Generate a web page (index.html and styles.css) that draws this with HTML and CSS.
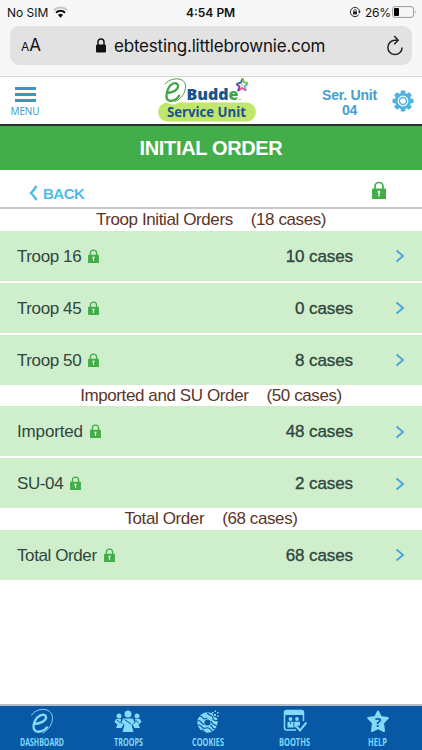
FILE: index.html
```
<!DOCTYPE html>
<html lang="en">
<head>
    <meta charset="UTF-8">
    <meta name="viewport" content="width=device-width, initial-scale=1.0">
    <title>eBudde Service Unit - Initial Order</title>
    <link rel="stylesheet" href="styles.css">
</head>
<body>

<svg class="defs" width="0" height="0">
    <symbol id="lock" viewBox="0 0 14 18">
        <path d="M3 9V5.500a4 4 0 0 1 8 0V9" fill="none" stroke="#43ad4a" stroke-width="1.700"/>
        <rect x="0" y="7.500" width="14" height="10.500" rx=".8" fill="#43ad4a"/>
        <circle cx="7" cy="11" r="1.500" fill="#e4f5e0"/>
        <path d="M7 11v4.500" stroke="#e4f5e0" stroke-width="1.400"/>
    </symbol>
    <symbol id="next" viewBox="0 0 10 14">
        <path d="M1.500 1.500L8 7l-6.500 5.500" fill="none" stroke="#4aa3df" stroke-width="1.900"/>
    </symbol>
</svg>

<div class="status">
    <span class="carrier">No SIM</span>
    <svg class="wifi" width="15" height="12" viewBox="0 0 15 12">
        <path d="M.8 4.200a9.600 9.600 0 0 1 13.400 0" fill="none" stroke="#c4c4c4" stroke-width="1.900"/>
        <path d="M3 6.700a6.400 6.400 0 0 1 9 0" fill="none" stroke="#111" stroke-width="2"/>
        <path d="M5 9a3.700 3.700 0 0 1 5 0L7.500 11.700z" fill="#111"/>
    </svg>
    <span class="clock">4:54 PM</span>
    <svg class="rotation" width="12" height="12" viewBox="0 0 12 12">
        <path d="M9.800 8.600A4.600 4.600 0 1 1 10.600 6" fill="none" stroke="#222" stroke-width="1"/>
        <path d="M8.900 5.600h3l-1.500 2z" fill="#222"/>
        <rect x="4" y="5.400" width="4" height="3" fill="#222"/>
        <path d="M4.800 5.500v-.7a1.200 1.200 0 0 1 2.400 0v.7" fill="none" stroke="#222" stroke-width=".8"/>
    </svg>
    <span class="percent">26%</span>
    <svg class="battery" width="25" height="12" viewBox="0 0 25 12">
        <rect x=".6" y=".6" width="21" height="10.800" rx="2.600" fill="none" stroke="#999" stroke-width="1"/>
        <rect x="2" y="2" width="5" height="8" rx="1" fill="#000"/>
        <path d="M23 4.300q1.500 1.700 0 3.400z" fill="#999"/>
    </svg>
</div>

<div class="browser">
    <div class="address">
        <span class="reader"><small>A</small>A</span>
        <svg class="secure" width="10" height="15" viewBox="0 0 10 15">
            <path d="M2 7V4a3 3 0 0 1 6 0v3" fill="none" stroke="#111" stroke-width="1.400"/>
            <rect y="6.500" width="10" height="8" rx="1.200" fill="#111"/>
        </svg>
        <span class="url">ebtesting.littlebrownie.com</span>
        <svg class="reload" width="18" height="21" viewBox="0 0 18 21">
            <path d="M11.200 5.300H9a7.100 7.100 0 1 0 7.100 7.100" fill="none" stroke="#222" stroke-width="1.500"/>
            <path d="M8.200 1l4 4.300-4 4" fill="none" stroke="#222" stroke-width="1.500"/>
        </svg>
    </div>
</div>

<header class="header">
    <div class="menu">
        <span class="bars"></span>
        <span>MENU</span>
    </div>
    <svg class="logo" width="100" height="46" viewBox="0 0 100 46">
        <rect x="1" y="24.500" width="98" height="19" rx="9.500" fill="#c0e66b"/>
        <ellipse cx="16" cy="15.500" rx="9.500" ry="11" fill="#fff"/>
        <path d="M10.500 15C17 14.500 21.500 11.500 21 7.500 20 3 13 5 10.500 12.500 8 20.500 10.500 23 14 22.800 18 22.500 21 20 22.500 17" fill="none" stroke="#43a548" stroke-width="2.300"/>
        <path d="M8 6.500C12-.5 28-2 28.500 8 28.700 15 24 21.500 17.500 23.500" fill="none" stroke="#43a548" stroke-width="1"/>
        <text class="logo-text" x="29.500" y="22" textLength="52" lengthAdjust="spacingAndGlyphs">Budd<tspan class="leaf">e</tspan></text>
        <g fill="none" stroke-width="1.900">
            <path d="M80 6l4-1.500 1.500-4" stroke="#2a69b0"/>
            <path d="M85.500 0l1.500 4.500 4 .5" stroke="#7cc143"/>
            <path d="M91 5.500l-3.500 3 1.500 4" stroke="#50b8e6"/>
            <path d="M89 12.500L85 10l-4 3" stroke="#e65a94"/>
            <path d="M81 13l1.500-4.500L79 6" stroke="#77459a"/>
        </g>
        <circle cx="85" cy="7" r="1" fill="#f4b33d"/>
        <circle cx="83" cy="21.500" r=".6" fill="#18528f"/>
        <text class="logo-service" x="10" y="38.500" textLength="79" lengthAdjust="spacingAndGlyphs">Service Unit</text>
    </svg>
    <div class="unit">Ser. Unit<br>04</div>
    <svg class="gear" width="22" height="22" viewBox="-11 -11 22 22">
        <g fill="#4db2e2">
            <rect x="-2.300" y="-10.500" width="4.600" height="21" rx="1"/>
            <rect x="-2.300" y="-10.500" width="4.600" height="21" rx="1" transform="rotate(45)"/>
            <rect x="-2.300" y="-10.500" width="4.600" height="21" rx="1" transform="rotate(90)"/>
            <rect x="-2.300" y="-10.500" width="4.600" height="21" rx="1" transform="rotate(135)"/>
            <circle r="8"/>
        </g>
        <circle r="4.800" fill="#4db2e2" stroke="#fff" stroke-width="1.200"/>
        <circle r="2.800" fill="#fff"/>
    </svg>
</header>

<h1 class="title">INITIAL ORDER</h1>

<div class="toolbar">
    <a class="back">
        <svg width="9" height="16" viewBox="0 0 9 16">
            <path d="M7.500 1Q5 5 2 8q3 3 5.500 7" fill="none" stroke="#4dbbec" stroke-width="2.400"/>
        </svg>
        <span>BACK</span>
    </a>
    <svg class="lock-all" width="14" height="18"><use href="#lock"/></svg>
</div>

<main>
    <h2 class="group"><span>Troop Initial Orders</span><span>(18 cases)</span></h2>
    <div class="rows">
        <div class="row">
            <span class="name">Troop 16</span><svg class="lock" width="11" height="14"><use href="#lock"/></svg>
            <span class="cases">10 cases</span><svg class="next" width="10" height="14"><use href="#next"/></svg>
        </div>
        <div class="row">
            <span class="name">Troop 45</span><svg class="lock" width="11" height="14"><use href="#lock"/></svg>
            <span class="cases">0 cases</span><svg class="next" width="10" height="14"><use href="#next"/></svg>
        </div>
        <div class="row">
            <span class="name">Troop 50</span><svg class="lock" width="11" height="14"><use href="#lock"/></svg>
            <span class="cases">8 cases</span><svg class="next" width="10" height="14"><use href="#next"/></svg>
        </div>
    </div>

    <h2 class="group"><span>Imported and SU Order</span><span>(50 cases)</span></h2>
    <div class="rows">
        <div class="row">
            <span class="name wide">Imported</span><svg class="lock" width="11" height="14"><use href="#lock"/></svg>
            <span class="cases">48 cases</span><svg class="next" width="10" height="14"><use href="#next"/></svg>
        </div>
        <div class="row">
            <span class="name">SU-04</span><svg class="lock" width="11" height="14"><use href="#lock"/></svg>
            <span class="cases">2 cases</span><svg class="next" width="10" height="14"><use href="#next"/></svg>
        </div>
    </div>

    <h2 class="group"><span>Total Order</span><span>(68 cases)</span></h2>
    <div class="rows">
        <div class="row">
            <span class="name">Total Order</span><svg class="lock" width="11" height="14"><use href="#lock"/></svg>
            <span class="cases">68 cases</span><svg class="next" width="10" height="14"><use href="#next"/></svg>
        </div>
    </div>
</main>

<nav class="tabs">
    <a class="tab">
        <svg width="24" height="26" viewBox="0 0 24 26">
            <path d="M4 16C11 15.500 16.500 12.500 16 9 15 4.500 7.500 7 4.500 14 2 21 5 24 8.500 23.700 13 23.200 16 21 17.500 18.500" fill="none" stroke="#82d9fa" stroke-width="2.400"/>
            <path d="M1.500 7.500C6-.5 21.500-1.500 22.500 9.500 22.700 16 18.500 22 12.500 25" fill="none" stroke="#82d9fa" stroke-width="1"/>
        </svg>
        <svg width="44" height="14"><text x="0" y="10" textLength="44" lengthAdjust="spacingAndGlyphs">DASHBOARD</text></svg>
    </a>
    <a class="tab">
        <svg width="28" height="26" viewBox="0 0 28 26">
            <g fill="#82d9fa">
                <circle cx="14" cy="6" r="3.500"/>
                <circle cx="5" cy="8" r="2.500"/>
                <circle cx="23" cy="8" r="2.500"/>
                <path d="M9 10.500h10l1.500 4-3 2.500 2 7h-11l2-7-3-2.500z"/>
                <path d="M2 11h5l-.5 3.500 3 2L7.500 20H2l1.500-3.500L.5 14z"/>
                <path d="M26 11h-5l.5 3.500-3 2 2 3.500H26l-1.500-3.500 3-2.500z"/>
            </g>
            <path d="M10.500 11.500l6.500 4.500M3 12l3.500 3M21.500 12l3 3" stroke="#0758a5" stroke-width="1"/>
        </svg>
        <svg width="29" height="14"><text x="0" y="10" textLength="29" lengthAdjust="spacingAndGlyphs">TROOPS</text></svg>
    </a>
    <a class="tab">
        <svg width="24" height="26" viewBox="0 0 24 26">
            <circle cx="11.500" cy="14.500" r="6.600" fill="none" stroke="#82d9fa" stroke-width="7.200"/>
            <path d="M3 8q3 0 4 2t4 0M1.500 12.500q3 0 4 2t3 1.500M2 17q3 0 4 2t4 1 5 2 3 1M11 5q2 2 4 2.500t2 3 5 2M15 13q1 3 3 3.500t3 2M14 17.500q2 0 2.500 2t3 1M5 22q3 0 4 3" fill="none" stroke="#0758a5" stroke-width="1.200"/>
            <path d="M15 2h9v8l-6-1z" fill="#0758a5"/>
            <path d="M16 4h1.500v1.500H16zM18.500 2.500H20V4h-1.500zM21 4h1.500v1.500H21zM18 6h2v2h-2zM21 7.500h1.500V9H21z" fill="#82d9fa"/>
        </svg>
        <svg width="32" height="14"><text x="0" y="10" textLength="32" lengthAdjust="spacingAndGlyphs">COOKIES</text></svg>
    </a>
    <a class="tab">
        <svg width="24" height="26" viewBox="0 0 24 26">
            <path d="M20.500 13V4.500q0-2-2-2h-15q-2 0-2 2V20q0 2 2 2H13" fill="none" stroke="#82d9fa" stroke-width="1.500"/>
            <path d="M1.500 3h19v4h-19z" fill="#82d9fa"/>
            <g fill="#82d9fa">
                <circle cx="7.500" cy="11" r="1.900"/>
                <circle cx="14" cy="11" r="1.900"/>
                <path d="M4.500 13.800h6v5.700h-6zM11.300 13.800h5.700v3l-2 2.700h-3.700z"/>
            </g>
            <path d="M7.500 13.500v3" stroke="#0758a5" stroke-width=".8"/>
            <path d="M13.500 18.500l3.500 4 6.500-8" fill="none" stroke="#0758a5" stroke-width="4"/>
            <path d="M13.500 18.500l3.500 4 6.500-8" fill="none" stroke="#82d9fa" stroke-width="2"/>
        </svg>
        <svg width="31" height="14"><text x="0" y="10" textLength="31" lengthAdjust="spacingAndGlyphs">BOOTHS</text></svg>
    </a>
    <a class="tab">
        <svg width="24" height="26" viewBox="0 0 24 26">
            <path d="M12 3.500l2.800 5.500 7 1-4.800 5 1 8-6-3-6 3 1-8-4.800-5 7-1z" fill="#82d9fa" stroke="#82d9fa" stroke-width="2" stroke-linejoin="round"/>
            <text class="question" x="12" y="19" text-anchor="middle">?</text>
        </svg>
        <svg width="19" height="14"><text x="0" y="10" textLength="19" lengthAdjust="spacingAndGlyphs">HELP</text></svg>
    </a>
</nav>

</body>
</html>
```
FILE: styles.css
```
* {
    box-sizing: border-box;
}

body {
    margin: 0;
    height: 750px;
    display: flex;
    flex-direction: column;
    overflow: hidden;
    background-color: #fff;
    font-family: "Liberation Sans", Arial, sans-serif;
}

svg {
    display: block;
    flex: none;
}

.defs {
    position: absolute;
}

/* phone status bar */
.status {
    display: flex;
    align-items: center;
    height: 24px;
    padding: 0 5px 0 7px;
    background-color: #f7f7f7;
    color: #111;
    font-family: Inter, sans-serif;
    font-size: 12px;
    white-space: nowrap;
}

.carrier {
    width: 41px;
}

.wifi {
    margin-left: 5px;
}

.clock {
    margin-left: 118px;
    width: 50px;
    font-weight: 600;
}

.rotation {
    margin-left: auto;
}

.percent {
    margin-left: 4px;
    width: 27px;
    letter-spacing: -0.2px;
}

/* address bar */
.browser {
    height: 53px;
    padding: 2px 10px 0;
    background-color: #f7f7f7;
    border-bottom: 1px solid #d5d5d5;
}

.address {
    display: flex;
    align-items: center;
    height: 39px;
    padding: 0 8px 0 11px;
    border-radius: 9px;
    background-color: #e2e2e3;
    color: #111;
    font-family: Inter, sans-serif;
}

.reader {
    width: 20px;
    font-size: 17px;
    line-height: 20px;
}

.reader small {
    font-size: 12px;
}

.secure {
    margin-left: 55px;
}

.url {
    margin-left: 8px;
    font-size: 17px;
    letter-spacing: -0.2px;
}

.reload {
    margin-left: auto;
}

/* site header */
.header {
    display: flex;
    align-items: center;
    height: 49px;
    padding: 0 8px 0 11px;
    border-bottom: 2px solid #26352a;
}

.menu {
    width: 28px;
    display: flex;
    flex-direction: column;
    align-items: center;
    color: #3798c8;
    font-family: "Open Sans", sans-serif;
    font-size: 10px;
    line-height: 14px;
    letter-spacing: -0.1px;
}

.bars {
    width: 21px;
    height: 15px;
    margin: 3px 0 2px;
    border-top: 3px solid #3798c8;
    border-bottom: 3px solid #3798c8;
    background: linear-gradient(#3798c8, #3798c8) center / 100% 3px no-repeat;
}

.logo {
    margin-left: 118px;
    margin-top: 1px;
}

.logo-text,
.logo-service {
    font-family: "Open Sans", sans-serif;
    font-weight: 800;
    font-size: 16.5px;
    fill: #18528f;
}

.logo-service {
    font-size: 14px;
    font-weight: 700;
}

.logo-text .leaf {
    fill: #43a548;
}

.unit {
    margin-left: auto;
    color: #439fcf;
    font-size: 14px;
    font-weight: bold;
    line-height: 15px;
    text-align: center;
    letter-spacing: -0.2px;
    padding-top: 4px;
}

.gear {
    margin-left: 15px;
}

.title {
    margin: 0;
    height: 44px;
    background-color: #43ad4a;
    color: #fff;
    font-size: 20px;
    line-height: 44px;
    text-align: center;
    letter-spacing: -0.35px;
}

.toolbar {
    display: flex;
    align-items: center;
    height: 39px;
    padding: 0 36px 0 29px;
    border-bottom: 2px solid #c8c8c8;
}

.back {
    display: flex;
    align-items: center;
    gap: 5px;
    padding-top: 9px;
    color: #4dbbec;
    font-size: 15px;
    font-weight: bold;
    letter-spacing: -0.5px;
}

.lock-all {
    margin-left: auto;
    margin-top: 2px;
}

/* order list */
.group {
    display: flex;
    justify-content: center;
    gap: 18px;
    margin: 0;
    height: 21.5px;
    color: #5b3528;
    font-size: 17px;
    font-weight: normal;
    line-height: 22px;
    letter-spacing: -0.4px;
}

.rows {
    display: grid;
    gap: 2px;
}

.row {
    display: flex;
    align-items: center;
    height: 50px;
    padding: 2px 17px 0;
    background-color: #cfeecb;
    color: #30463f;
    font-size: 17px;
}

.name {
    letter-spacing: -0.4px;
}

.name.wide {
    letter-spacing: -0.15px;
}

.lock {
    margin-left: 7px;
    margin-top: -2px;
}

.cases {
    margin-left: auto;
    letter-spacing: -0.1px;
    -webkit-text-stroke: 0.35px #30463f;
}

.next {
    margin-left: 42px;
    margin-top: -1px;
}

/* bottom navigation */
.tabs {
    display: grid;
    grid-template-columns: 84px 88px 72px 101px 65px;
    height: 46px;
    margin-top: auto;
    padding-top: 2px;
    border-top: 2px solid #b5bfcc;
    background-color: #0758a5;
}

.tab {
    display: flex;
    flex-direction: column;
    align-items: center;
    gap: 2px;
}

.tab text {
    fill: #82d9fa;
    font-family: "Open Sans", sans-serif;
    font-size: 10px;
    font-weight: 700;
}

.tab .question {
    fill: #0758a5;
    font-size: 13px;
}
```
